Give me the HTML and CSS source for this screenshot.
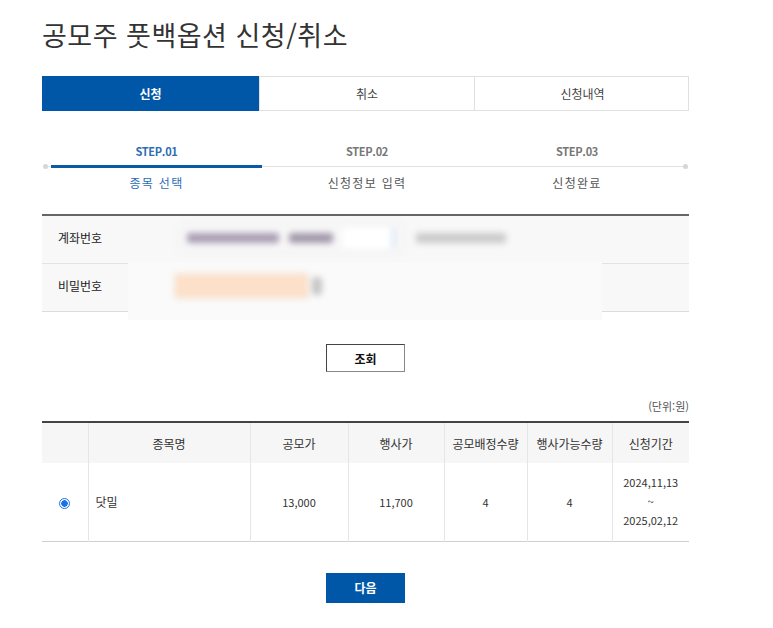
FILE: index.html
```html
<!DOCTYPE html>
<html lang="ko">
<head>
<meta charset="utf-8">
<title>공모주 풋백옵션 신청/취소</title>
<link rel="stylesheet" href="styles.css">
</head>
<body>
<div class="page">
  <h1 class="title">공모주 풋백옵션 신청/취소</h1>

  <div class="tabs">
    <div class="tab active">신청</div>
    <div class="tab">취소</div>
    <div class="tab">신청내역</div>
  </div>

  <div class="steps">
    <div class="track">
      <span class="dot left"></span>
      <span class="dot right"></span>
      <div class="step-grid">
        <div class="step active"><div class="step-no">STEP.01</div><div class="step-bar"></div><div class="step-name">종목 선택</div></div>
        <div class="step"><div class="step-no">STEP.02</div><div class="step-bar"></div><div class="step-name">신청정보 입력</div></div>
        <div class="step"><div class="step-no">STEP.03</div><div class="step-bar"></div><div class="step-name">신청완료</div></div>
      </div>
    </div>
  </div>

  <div class="form">
    <div class="form-row">
      <div class="form-label">계좌번호</div>
      <div class="form-value blurred">
        <div class="acct-select"><span class="blob b1"></span><span class="blob b2"></span><span class="sel-box"></span></div>
        <span class="blob b3"></span>
      </div>
    </div>
    <div class="form-row">
      <div class="form-label">비밀번호</div>
      <div class="form-value blurred">
        <div class="pw-input"></div><span class="pw-icon"></span>
      </div>
    </div>
    <div class="veil"></div>
  </div>

  <div class="btn-row first"><button class="btn outline">조회</button></div>

  <div class="unit">(단위:원)</div>

  <table class="grid">
    <colgroup>
      <col class="c1"><col class="c2"><col class="c3"><col class="c4"><col class="c5"><col class="c6"><col class="c7">
    </colgroup>
    <thead>
      <tr><th></th><th>종목명</th><th>공모가</th><th>행사가</th><th>공모배정수량</th><th>행사가능수량</th><th>신청기간</th></tr>
    </thead>
    <tbody>
      <tr>
        <td class="center"><span class="radio"></span></td>
        <td class="left">닷밀</td>
        <td>13,000</td>
        <td>11,700</td>
        <td>4</td>
        <td>4</td>
        <td class="period">2024,11,13<br>~<br>2025,02,12</td>
      </tr>
    </tbody>
  </table>

  <div class="btn-row second"><button class="btn primary">다음</button></div>
</div>
</body>
</html>
```

FILE: styles.css
```css
* { box-sizing: border-box; }
html, body { margin: 0; padding: 0; background: #fff; }
body {
  font-family: "Noto Sans CJK KR", "Noto Sans", sans-serif;
  font-size: 12px;
  color: #333;
}
.page {
  width: 647px;
  margin-left: 42px;
  padding-top: 17px;
}
.title {
  margin: 0;
  font-size: 27px;
  line-height: 36px;
  font-weight: 400;
  color: #333;
  letter-spacing: 0.5px;
}
.tabs {
  margin-top: 23px;
  display: grid;
  grid-template-columns: 216px 215px 216px;
  height: 35px;
  border: 1px solid #e0e0e0;
}
.tab {
  display: flex;
  align-items: center;
  justify-content: center;
  font-size: 12px;
  color: #444;
  border-left: 1px solid #e0e0e0;
}
.tab:first-child { border-left: none; }
.tab.active {
  background: #0057a8;
  color: #fff;
  font-weight: 700;
  margin: -1px 0 -1px -1px;
}
.steps { padding-top: 33px; }
.track {
  position: relative;
  margin: 0 2px;
}
.track::before {
  content: "";
  position: absolute;
  left: 0; right: 0;
  top: 22px;
  height: 1px;
  background: #e2e2e2;
}
.dot {
  position: absolute;
  top: 20px;
  width: 5px; height: 5px;
  border-radius: 50%;
  background: #d6d6d6;
}
.dot.left { left: -1px; }
.dot.right { right: -1px; }
.step-grid {
  display: grid;
  grid-template-columns: 211px 210px 210px;
  margin: 0 6px 0 7px;
  position: relative;
}
.step { text-align: center; }
.step-no {
  font-size: 11px;
  line-height: 14px;
  font-weight: 700;
  color: #777;
  letter-spacing: -0.3px;
}
.step-bar { height: 3px; margin-top: 7px; }
.step.active .step-bar { background: #0b5aa6; }
.step.active .step-no, .step.active .step-name { color: #2d6db5; }
.step-name {
  margin-top: 8px;
  font-size: 12px;
  line-height: 14px;
  color: #555;
  letter-spacing: 1.3px;
}
.form {
  margin-top: 24px;
  border-top: 2px solid #666;
  position: relative;
}
.form-row {
  display: flex;
  align-items: center;
  height: 48px;
  background: #f8f8f8;
  border-bottom: 1px solid #e3e3e3;
}
.form-row + .form-row { border-bottom-color: #dcdcdc; }
.form-label {
  width: 130px;
  padding-left: 16px;
  padding-bottom: 4px;
  font-size: 12px;
  color: #222;
}
.form-value {
  display: flex;
  align-items: center;
  position: relative;
  z-index: 2;
  padding-bottom: 3px;
}
.blurred { filter: blur(3px); }
.acct-select {
  display: flex;
  align-items: center;
  gap: 10px;
  height: 30px;
  padding: 0 8px;
  margin-left: 6px;
  border: 1px solid #ececec;
  border-radius: 3px;
}
.blob { display: inline-block; height: 10px; border-radius: 2px; background: #a89cb2; }
.b1 { width: 92px; }
.b2 { width: 44px; background: #a096a8; }
.sel-box { width: 52px; height: 20px; background: #fff; border-right: 3px solid #cfe0f3; }
.b3 { width: 90px; margin-left: 12px; background: #cacaca; }
.pw-input {
  margin-left: 3px;
  width: 133px;
  height: 24px;
  background: #fde0c9;
  border: 1px solid #f0d2bb;
}
.pw-icon {
  width: 10px; height: 18px;
  margin-left: 4px;
  background: #c4c4c4;
  border-radius: 4px;
}
.veil {
  position: absolute;
  left: 86px;
  top: 46px;
  width: 474px;
  height: 58px;
  background: #fafafa;
  z-index: 1;
}
.btn-row { display: flex; justify-content: center; }
.btn-row.first { margin-top: 32px; }
.btn-row.second { margin-top: 31px; }
.btn {
  font-family: inherit;
  font-size: 12px;
  font-weight: 700;
  width: 79px;
  padding: 0;
  cursor: pointer;
}
.btn.outline {
  height: 28px;
  background: #fff;
  color: #111;
  border: 1px solid #444;
  border-right-color: #888;
  border-bottom-color: #888;
}
.btn.primary {
  height: 30px;
  background: #0057a8;
  color: #fff;
  border: none;
}
.unit {
  margin-top: 27px;
  text-align: right;
  font-size: 11px;
  line-height: 14px;
  color: #555;
}
.grid {
  margin-top: 8px;
  width: 100%;
  border-collapse: collapse;
  table-layout: fixed;
  border-top: 2px solid #444;
  border-bottom: 1px solid #cfcfcf;
}
.c1 { width: 46px; }
.c2 { width: 162px; }
.c3 { width: 98px; }
.c4 { width: 96px; }
.c5 { width: 83px; }
.c6 { width: 85px; }
.c7 { width: 77px; }
.grid th {
  height: 41px;
  background: #f6f6f6;
  font-weight: 400;
  font-size: 12px;
  color: #333;
  border-left: 1px solid #e6e6e6;
  padding: 0;
}
.grid td {
  height: 78px;
  text-align: center;
  font-size: 11px;
  color: #333;
  border-left: 1px solid #e6e6e6;
  padding: 0;
}
.grid th:first-child, .grid td:first-child { border-left: none; }
.grid td.left { text-align: left; padding-left: 7px; font-size: 12px; }
.grid td.period { line-height: 19px; font-size: 11px; }
.radio {
  display: inline-block;
  width: 11px; height: 11px;
  border-radius: 50%;
  border: 1px solid #1a73e8;
  background: radial-gradient(circle, #1a73e8 0 3px, #fff 3.5px);
  vertical-align: middle;
}
```
